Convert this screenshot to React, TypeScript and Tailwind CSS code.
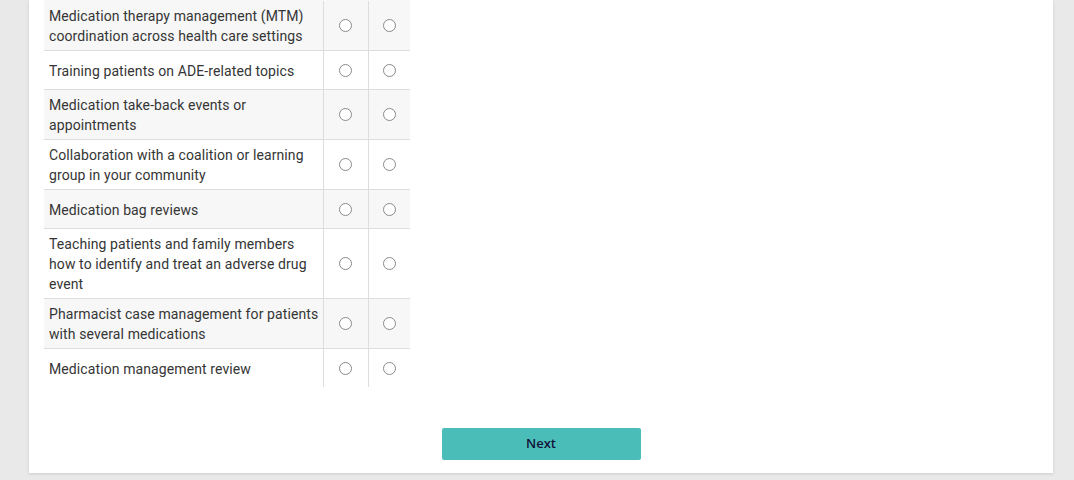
const items = [
  "Medication therapy management (MTM) coordination across health care settings",
  "Training patients on ADE-related topics",
  "Medication take-back events or appointments",
  "Collaboration with a coalition or learning group in your community",
  "Medication bag reviews",
  "Teaching patients and family members how to identify and treat an adverse drug event",
  "Pharmacist case management for patients with several medications",
  "Medication management review",
];

const Radio = () => (
  <span className="block h-[13px] w-[13px] rounded-full border border-[#8a8a8a] bg-white"></span>
);

export default function App() {
  return (
    <div className="h-[480px] overflow-hidden bg-[#e9e9e9] font-['Roboto',sans-serif]">
      <div className="ml-[29px] w-[1024px] bg-white pb-[13px] shadow-[0_1px_3px_rgba(0,0,0,0.12)]">
        <div className="ml-[15px] w-[366px] text-[14px] leading-[20px] tracking-[0.1px] text-[#353535]">
          {items.map((label, i) => (
            <div
              key={i}
              className={`grid grid-cols-[279px_45px_42px] ${i % 2 === 0 ? "bg-[#f7f7f7]" : "bg-white"} ${
                i < items.length - 1 ? "border-b border-[#dddddd]" : ""
              } ${i === 0 ? "pt-[1px]" : ""}`}
            >
              <div className="flex min-h-[38px] items-center pb-[4px] pl-[5px] pr-[1px] pt-[5px]">{label}</div>
              <div className="flex items-center justify-center border-l border-[#dddddd] pr-[1px]">
                <Radio />
              </div>
              <div className="flex items-center justify-center border-l border-[#dddddd]">
                <Radio />
              </div>
            </div>
          ))}
        </div>
        <div className="mt-[41px] flex justify-center">
          <button className="h-[32px] w-[199px] rounded-[2px] bg-[#4abdb8] font-['Open_Sans',sans-serif] text-[13px] font-semibold text-[#12123a]">
            Next
          </button>
        </div>
      </div>
    </div>
  );
}
